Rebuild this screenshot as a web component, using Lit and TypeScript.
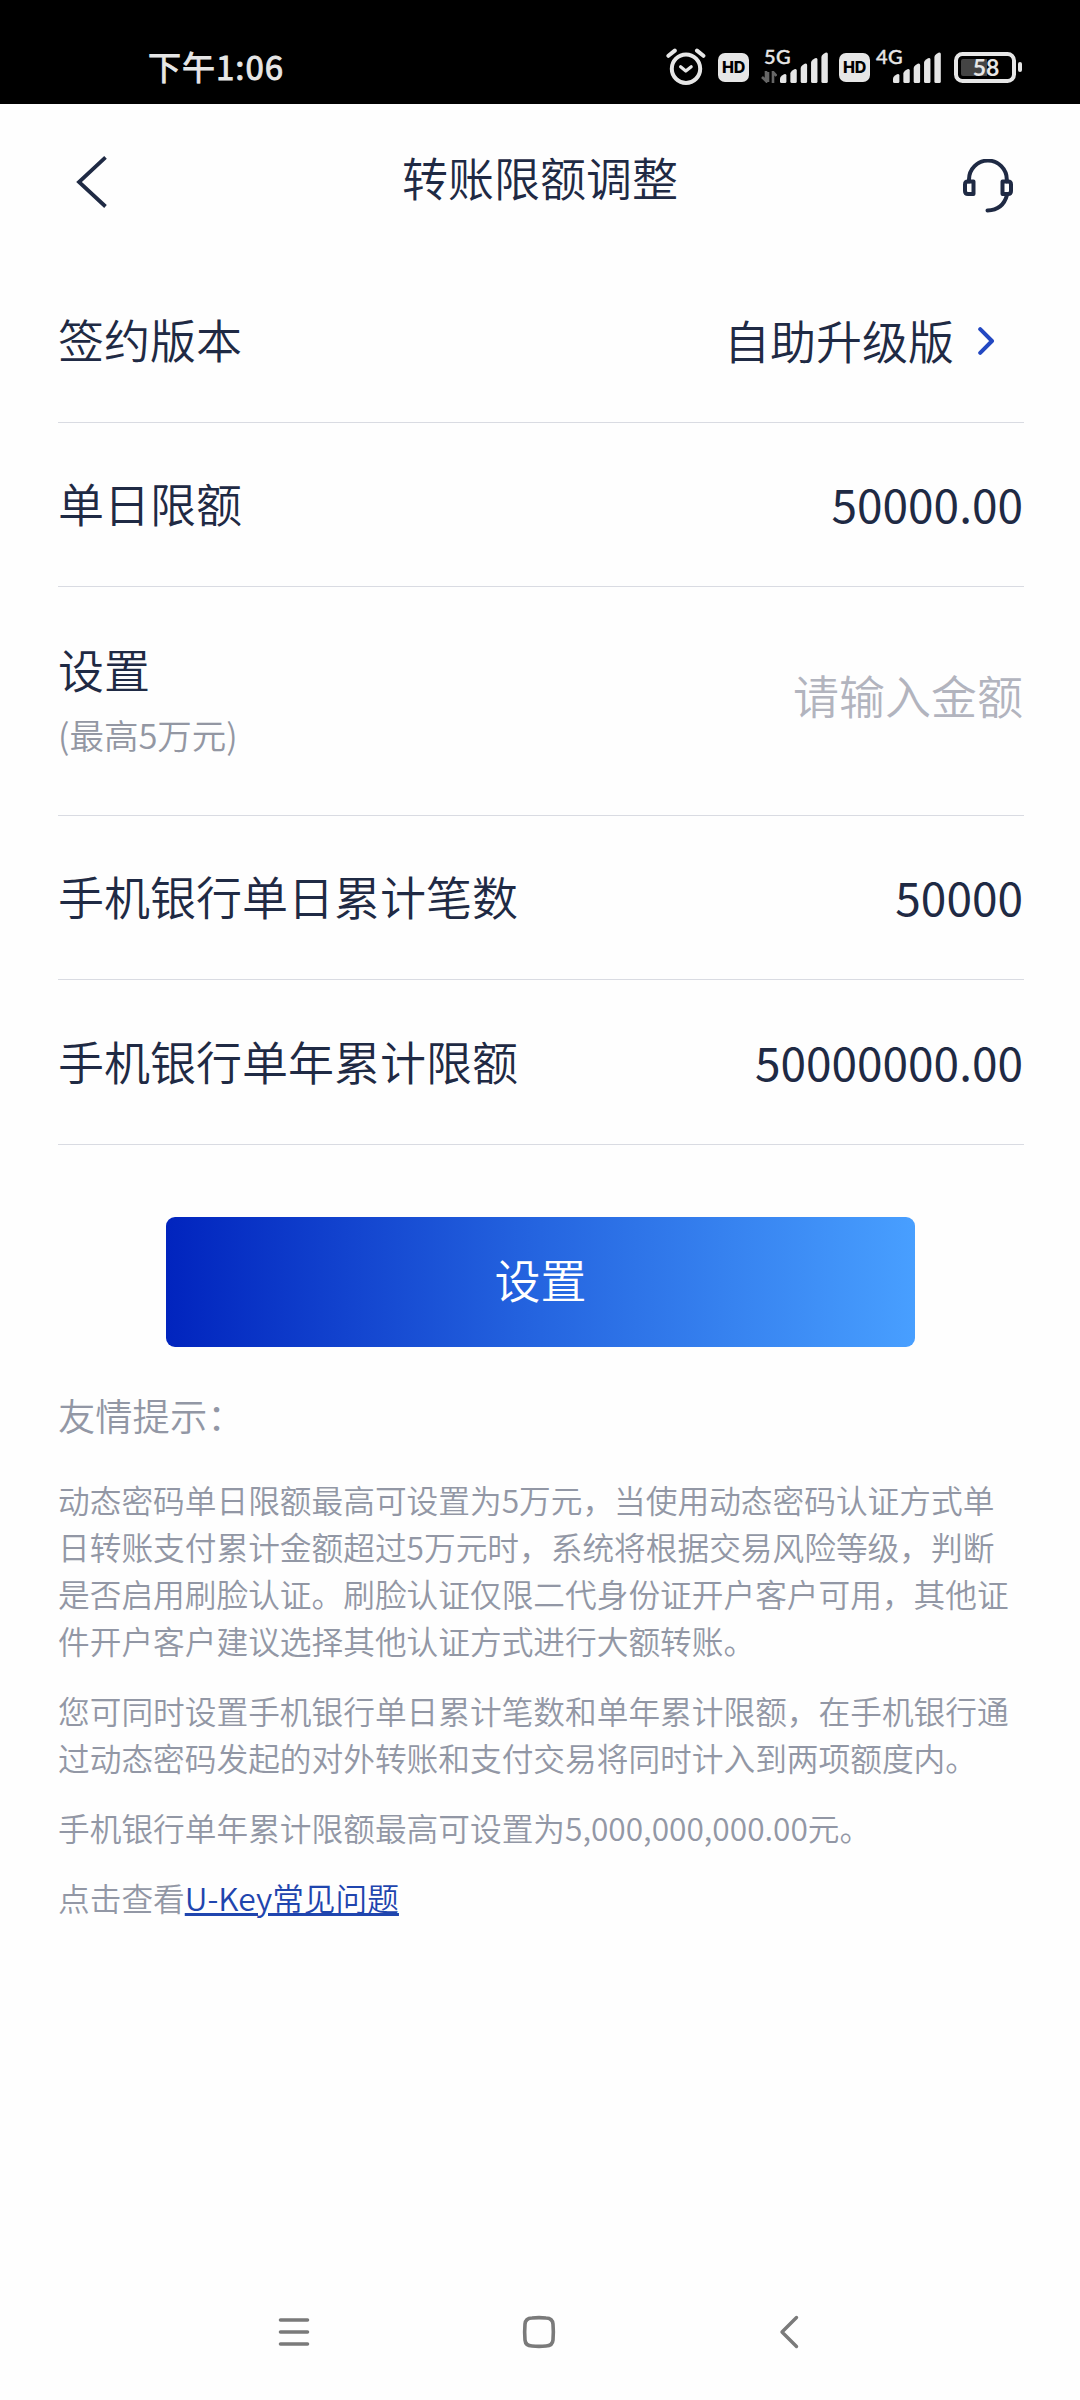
import { LitElement, html, svg, css } from "lit";
import { customElement, property } from "lit/decorators.js";

const BAR_TOPS = [22, 17, 11.5, 6, 0.5];

@customElement("signal-bars")
class SignalBars extends LitElement {
  static styles = css`
    :host { display: block; }
    svg { display: block; }
  `;
  render() {
    return html`<svg width="48" height="31" viewBox="0 0 48 31" fill="#e6e6e6">
      ${BAR_TOPS.map((t, i) => {
        const x = i * 10.35;
        return svg`<path d=${`M${x} ${t + 4.5}Q${x} ${t + 3} ${x + 2} ${t + 1.6}L${x + 4} ${t + 0.3}Q${x + 6.4} ${t - 0.6} ${x + 6.4} ${t + 1.6}V29.5Q${x + 6.4} 31 ${x + 5} 31H${x + 1.5}Q${x} 31 ${x} 29.5Z`}></path>`;
      })}
    </svg>`;
  }
}

@customElement("status-bar")
class StatusBar extends LitElement {
  static styles = css`
    :host {
      display: flex; height: 104px; box-sizing: border-box; background: #000; color: #e6e6e6;
      padding: 0 57px 0 148px; justify-content: space-between; align-items: flex-start;
    }
    .time {
      font-size: 33px; line-height: 40px; margin-top: 46px; letter-spacing: 1px;
      -webkit-text-stroke: 0.9px #e6e6e6;
    }
    .icons { display: flex; align-items: flex-start; padding-top: 47px; }
    svg { display: block; }
    .hd {
      width: 31px; height: 29px; border-radius: 7px; background: #e6e6e6; color: #000; margin-top: 6px;
      font: 800 16px/29px Inter, "Open Sans", sans-serif; text-align: center; letter-spacing: -0.2px;
    }
    .alarm { margin-right: 12px; }
    .net { display: flex; flex-direction: column; font: 500 20px/20px Lato, "Open Sans", sans-serif; -webkit-text-stroke: 0.4px #e6e6e6; }
    .net-label { height: 23px; letter-spacing: 0.3px; white-space: nowrap; padding-left: 3px; margin-top: -1px; }
    .arrows { margin-top: 2px; }
    .five { width: 19px; margin-left: 12px; }
    .four { width: 20px; margin-left: 3px; }
    .bars { margin: 5px 0 0 0; }
    .second { margin-left: 11px; }
    .battery { margin: 5px 0 0 13px; }
    .pct { font: 700 23px Lato, "Open Sans", sans-serif; }
  `;
  render() {
    return html`
      <div class="time">下午1:06</div>
      <div class="icons">
        <svg class="alarm" width="40" height="40" viewBox="0 0 40 40" fill="none" stroke="#e6e6e6" stroke-linecap="round" stroke-linejoin="round">
          <circle cx="20" cy="21.7" r="14.2" stroke-width="4"></circle>
          <path d="M14.6 19.8l5.2 4.3 5.4-4.3" stroke-width="3.2"></path>
          <path d="M2.4 8.8L8.8 3.6M37.4 8.8L31 3.6" stroke-width="4"></path>
        </svg>
        <div class="hd">HD</div>
        <div class="net five">
          <span class="net-label">5G</span>
          <svg class="arrows" width="16" height="12" viewBox="0 0 16 12" stroke="#666" stroke-width="2.6" fill="none">
            <path d="M1 6l4 4V0M7 11V1M12 12V1l3.5 4"></path>
          </svg>
        </div>
        <signal-bars class="bars"></signal-bars>
        <div class="hd second">HD</div>
        <div class="net four"><span class="net-label">4G</span></div>
        <signal-bars class="bars"></signal-bars>
        <svg class="battery" width="69" height="31" viewBox="0 0 69 31">
          <rect x="2" y="2" width="58" height="27" rx="6.5" fill="none" stroke="#e6e6e6" stroke-width="4"></rect>
          <path d="M9 7H33V24H9Q7 24 7 22V9Q7 7 9 7Z" fill="#444"></path>
          <rect x="64" y="10" width="4" height="10" rx="2" fill="#e6e6e6"></rect>
          <text class="pct" x="32" y="24" text-anchor="middle" fill="#e6e6e6">58</text>
        </svg>
      </div>`;
  }
}

@customElement("limit-row")
class LimitRow extends LitElement {
  @property() label = "";
  @property() note = "";
  @property() value = "";
  @property() placeholder = "";
  @property({ type: Boolean }) link = false;

  static styles = css`
    :host {
      display: flex; justify-content: space-between; align-items: center; box-sizing: border-box;
      height: 100%; border-bottom: 1px solid #d9dbe2; font-size: 46px; line-height: 66px; color: #1f2a44;
      font-weight: 350;
    }
    .text { padding-bottom: 5px; }
    .text.noted { padding-bottom: 8px; }
    .note { font-size: 34.5px; line-height: 50px; color: #9397a3; margin-top: 8px; }
    .value { display: flex; align-items: center; gap: 24px; padding: 0 1px 3px 0; font-weight: 400; }
    .linked { padding: 0 29px 0 0; font-weight: 350; }
    .linked span { padding-bottom: 4px; }
    .placeholder { color: #b2b4be; padding: 0 1px 15px 0; }
    svg { display: block; }
  `;
  render() {
    return html`
      <div class="text ${this.note ? "noted" : ""}">
        <div>${this.label}</div>
        ${this.note ? html`<div class="note">${this.note}</div>` : ""}
      </div>
      ${this.placeholder
        ? html`<div class="placeholder">${this.placeholder}</div>`
        : html`<div class="value ${this.link ? "linked" : ""}">
            <span>${this.value}</span>
            ${this.link
              ? html`<svg width="17" height="28" viewBox="0 0 17 28" fill="none" stroke="#2348c2" stroke-width="4" stroke-linecap="round" stroke-linejoin="round">
                  <path d="M2.2 2.2L14 14 2.2 25.8"></path>
                </svg>`
              : ""}
          </div>`}`;
  }
}

@customElement("app-root")
class AppRoot extends LitElement {
  static styles = css`
    :host {
      display: flex; flex-direction: column; width: 1080px; height: 2400px; background: #fefefe;
      font-family: "Noto Sans CJK SC", "Noto Sans", sans-serif; color: #1f2a44; overflow: hidden;
    }
    svg { display: block; }
    .header {
      display: grid; grid-template-columns: 120px 1fr 120px; align-items: center; height: 155px;
    }
    .back { margin-left: 75px; }
    .title { text-align: center; font-size: 46px; line-height: 66px; padding-bottom: 11px; font-weight: 350; }
    .support { margin: 11px 0 0 1px; }
    .rows { display: grid; grid-template-rows: 164px 164px 229px 164px 165px; padding: 0 56px 0 58px; }
    .submit {
      width: 749px; height: 130px; margin: 72px 0 0 166px; border: 0; border-radius: 9px; padding: 0 0 9px;
      background: linear-gradient(90deg, #0124be, #2565e0 50%, #489fff);
      color: #fff; font: 350 46px "Noto Sans CJK SC", sans-serif;
    }
    .tips { padding: 0 56px 0 58px; color: #9297a5; font-size: 31.7px; line-height: 47px; font-weight: 350; }
    .tips-title { font-size: 37.3px; line-height: 54px; margin: 41px 0 34px; }
    .tips p { margin: 0 0 23px; }
    .tips a { color: #1f45ae; text-decoration: underline; }
    .nav { display: flex; justify-content: space-between; margin-top: auto; height: 136px; align-items: center; padding: 0 281px 0 278px; box-sizing: border-box; }
    .home { margin-right: 12px; }
  `;
  render() {
    return html`
      <status-bar></status-bar>
      <div class="header">
        <svg class="back" width="34" height="54" viewBox="0 0 34 54" fill="none" stroke="#1f2a44" stroke-width="3.8">
          <path d="M30.5 2.3L4 27 30.5 51.5"></path>
        </svg>
        <div class="title">转账限额调整</div>
        <svg class="support" width="52" height="56" viewBox="0 0 52 56" fill="none" stroke="#1f2a44" stroke-width="4" stroke-linecap="round">
          <path d="M8 22.5v-2a18.9 18.9 0 0 1 37.8 0v2"></path>
          <path d="M7 22.5h5.5v12.5H7q-3 0-3-3v-6.5q0-3 3-3zM47 22.5h-5.5v12.5H47q3 0 3-3v-6.5q0-3-3-3z" stroke-linejoin="round"></path>
          <path d="M46 36q-4 15-19.5 15.5"></path>
        </svg>
      </div>
      <div class="rows">
        <limit-row label="签约版本" value="自助升级版" link></limit-row>
        <limit-row label="单日限额" value="50000.00"></limit-row>
        <limit-row label="设置" note="(最高5万元)" placeholder="请输入金额"></limit-row>
        <limit-row label="手机银行单日累计笔数" value="50000"></limit-row>
        <limit-row label="手机银行单年累计限额" value="50000000.00"></limit-row>
      </div>
      <button class="submit">设置</button>
      <div class="tips">
        <div class="tips-title">友情提示：</div>
        <p>动态密码单日限额最高可设置为5万元，当使用动态密码认证方式单日转账支付累计金额超过5万元时，系统将根据交易风险等级，判断是否启用刷脸认证。刷脸认证仅限二代身份证开户客户可用，其他证件开户客户建议选择其他认证方式进行大额转账。</p>
        <p>您可同时设置手机银行单日累计笔数和单年累计限额，在手机银行通过动态密码发起的对外转账和支付交易将同时计入到两项额度内。</p>
        <p>手机银行单年累计限额最高可设置为5,000,000,000.00元。</p>
        <p>点击查看<a>U-Key常见问题</a></p>
      </div>
      <div class="nav">
        <svg width="32" height="34" viewBox="0 0 32 34" stroke="#7a7a7a" stroke-width="3.6" stroke-linecap="round">
          <path d="M2.5 5H29.5M2.5 17H29.5M2.5 29H29.5"></path>
        </svg>
        <svg class="home" width="34" height="34" viewBox="0 0 34 34" fill="none" stroke="#7a7a7a" stroke-width="3.6">
          <path d="M10 3Q17 2.3 24 3Q30.5 3.2 31 9Q31.7 17 31 25Q30.5 30.8 24 31Q17 31.7 10 31Q3.5 30.8 3 25Q2.3 17 3 9Q3.5 3.2 10 3Z"></path>
        </svg>
        <svg width="20" height="34" viewBox="0 0 20 34" fill="none" stroke="#7a7a7a" stroke-width="3.4" stroke-linecap="round" stroke-linejoin="round">
          <path d="M17.5 2.5L3 17 17.5 31.5"></path>
        </svg>
      </div>`;
  }
}
